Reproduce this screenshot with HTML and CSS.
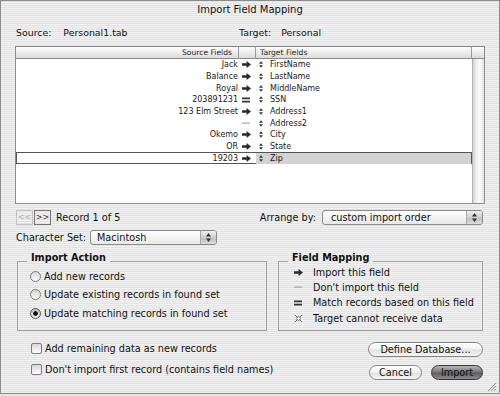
FILE: index.html
```html
<!DOCTYPE html>
<html lang="en">
<head>
    <meta charset="UTF-8">
    <meta name="viewport" content="width=device-width, initial-scale=1.0">
    <title>Import Field Mapping</title>
    <link rel="stylesheet" href="styles.css">
</head>
<body>

    <svg class="defs" xmlns="http://www.w3.org/2000/svg">
        <symbol id="i-arrow" viewBox="0 0 9 7"><path d="M0 2.2h4.6V0L9 3.5 4.6 7V4.8H0z"/></symbol>
        <symbol id="i-match" viewBox="0 0 8 6"><path d="M0 .5h8v1.7H0zM0 3.8h8v1.7H0z"/></symbol>
        <symbol id="i-skip" viewBox="0 0 8 6"><path d="M0 2.6h8v.9H0z"/></symbol>
        <symbol id="i-handle" viewBox="0 0 5 8"><path d="M2.5 0L5 3H0zM0 5h5L2.5 8z"/></symbol>
        <symbol id="i-none" viewBox="0 0 10 10"><path d="M1 1l8 8M9 1L1 9" stroke="currentColor" stroke-width="1.1" fill="none"/><circle cx="5" cy="5" r="2" fill="#fff" stroke="currentColor" stroke-width="1"/></symbol>
        <symbol id="i-updown" viewBox="0 0 5 9"><path d="M2.5 0L5 3.4H0zM0 5.6h5L2.5 9z"/></symbol>
    </svg>

    <div class="window">
        <div class="titlebar">Import Field Mapping</div>

        <div class="content">
            <div class="files">
                <div class="file-src"><span>Source:</span><span>Personal1.tab</span></div>
                <div class="file-dst"><span>Target:</span><span>Personal</span></div>
            </div>

            <div class="list">
                <div class="head head-src">Source Fields</div>
                <div class="head head-mid"></div>
                <div class="head head-dst">Target Fields</div>
                <div class="head head-scroll"></div>

                <div class="rows">
                    <div class="row">
                        <div class="c-src">Jack</div>
                        <div class="c-mid"><svg class="ico-arrow"><use href="#i-arrow"/></svg></div>
                        <div class="c-dst"><svg class="ico-handle"><use href="#i-handle"/></svg>FirstName</div>
                    </div>
                    <div class="row">
                        <div class="c-src">Balance</div>
                        <div class="c-mid"><svg class="ico-arrow"><use href="#i-arrow"/></svg></div>
                        <div class="c-dst"><svg class="ico-handle"><use href="#i-handle"/></svg>LastName</div>
                    </div>
                    <div class="row">
                        <div class="c-src">Royal</div>
                        <div class="c-mid"><svg class="ico-arrow"><use href="#i-arrow"/></svg></div>
                        <div class="c-dst"><svg class="ico-handle"><use href="#i-handle"/></svg>MiddleName</div>
                    </div>
                    <div class="row">
                        <div class="c-src">203891231</div>
                        <div class="c-mid"><svg class="ico-match"><use href="#i-match"/></svg></div>
                        <div class="c-dst"><svg class="ico-handle"><use href="#i-handle"/></svg>SSN</div>
                    </div>
                    <div class="row">
                        <div class="c-src">123 Elm Street</div>
                        <div class="c-mid"><svg class="ico-arrow"><use href="#i-arrow"/></svg></div>
                        <div class="c-dst"><svg class="ico-handle"><use href="#i-handle"/></svg>Address1</div>
                    </div>
                    <div class="row">
                        <div class="c-src"></div>
                        <div class="c-mid"><svg class="ico-skip"><use href="#i-skip"/></svg></div>
                        <div class="c-dst"><svg class="ico-handle"><use href="#i-handle"/></svg>Address2</div>
                    </div>
                    <div class="row">
                        <div class="c-src">Okemo</div>
                        <div class="c-mid"><svg class="ico-arrow"><use href="#i-arrow"/></svg></div>
                        <div class="c-dst"><svg class="ico-handle"><use href="#i-handle"/></svg>City</div>
                    </div>
                    <div class="row">
                        <div class="c-src">OR</div>
                        <div class="c-mid"><svg class="ico-arrow"><use href="#i-arrow"/></svg></div>
                        <div class="c-dst"><svg class="ico-handle"><use href="#i-handle"/></svg>State</div>
                    </div>
                    <div class="row sel">
                        <div class="c-src">19203</div>
                        <div class="c-mid"><svg class="ico-arrow"><use href="#i-arrow"/></svg></div>
                        <div class="c-dst"><svg class="ico-handle"><use href="#i-handle"/></svg>Zip</div>
                    </div>
                </div>

                <div class="scroll"></div>
            </div>

            <div class="nav">
                <div class="pager">
                    <span class="pg pg-off">&lt;&lt;</span>
                    <span class="pg">&gt;&gt;</span>
                    <span class="record">Record 1 of 5</span>
                </div>
                <div class="arrange">
                    <span>Arrange by:</span>
                    <div class="popup popup-wide">
                        <span class="popup-text">custom import order</span>
                        <span class="popup-arrows"><svg><use href="#i-updown"/></svg></span>
                    </div>
                </div>
            </div>

            <div class="charset">
                <span class="charset-label">Character Set:</span>
                <div class="popup popup-small">
                    <span class="popup-text">Macintosh</span>
                    <span class="popup-arrows"><svg><use href="#i-updown"/></svg></span>
                </div>
            </div>

            <div class="groups">
                <div class="group group-action">
                    <div class="group-title">Import Action</div>
                    <div class="opts">
                        <div class="opt"><span class="radio"></span>Add new records</div>
                        <div class="opt"><span class="radio"></span>Update existing records in found set</div>
                        <div class="opt"><span class="radio on"></span>Update matching records in found set</div>
                    </div>
                </div>
                <div class="group group-map">
                    <div class="group-title">Field Mapping</div>
                    <div class="keys">
                        <div class="key"><span class="key-ico"><svg class="ico-arrow"><use href="#i-arrow"/></svg></span>Import this field</div>
                        <div class="key"><span class="key-ico"><svg class="ico-skip"><use href="#i-skip"/></svg></span>Don't import this field</div>
                        <div class="key"><span class="key-ico"><svg class="ico-match"><use href="#i-match"/></svg></span>Match records based on this field</div>
                        <div class="key"><span class="key-ico"><svg class="ico-none"><use href="#i-none"/></svg></span>Target cannot receive data</div>
                    </div>
                </div>
            </div>

            <div class="bottom">
                <div class="checks">
                    <div class="check"><span class="box"></span>Add remaining data as new records</div>
                    <div class="check"><span class="box"></span>Don't import first record (contains field names)</div>
                </div>
                <div class="buttons">
                    <button class="btn btn-define">Define Database...</button>
                    <div class="btn-row">
                        <button class="btn btn-cancel">Cancel</button>
                        <button class="btn btn-import">Import</button>
                    </div>
                </div>
            </div>
        </div>

        <svg class="grip" viewBox="0 0 11 11"><path d="M10 2L2 10M10 5L5 10M10 8L8 10" stroke="#8a8a8a" stroke-width="1"/></svg>
    </div>

</body>
</html>
```

FILE: styles.css
```css
body {
    margin: 0;
    background-color: #e4e4e4;
    font-family: "DejaVu Sans", sans-serif;
    color: #111;
}
.defs {
    display: none;
}
.window {
    position: relative;
    width: 500px;
    height: 394px;
    box-sizing: border-box;
    border: 1px solid #8c8c8c;
    background: repeating-linear-gradient(to bottom, #f1f1f1 0, #f1f1f1 1px, #e3e3e3 1px, #e3e3e3 2px);
    background-attachment: fixed;
    display: flex;
    flex-direction: column;
}
.titlebar {
    height: 17px;
    line-height: 17px;
    font-size: 10px;
    text-align: center;
    color: #111;
}
.content {
    padding: 9px 15px 0 15px;
    display: flex;
    flex-direction: column;
    font-size: 9.7px;
}

/* source / target line */
.files {
    display: flex;
    height: 12px;
    line-height: 12px;
    font-size: 9.4px;
}
.file-src {
    width: 223px;
    display: flex;
    gap: 12px;
}
.file-dst {
    display: flex;
    gap: 10px;
}

/* mapping list */
.list {
    margin: 7px -1px 0;
    height: 158px;
    box-sizing: border-box;
    border: 1px solid #8a8a8a;
    background-color: #fff;
    display: grid;
    grid-template-columns: 223px 17px 216px 1fr;
    grid-template-rows: 12px 1fr;
}
.head {
    box-sizing: border-box;
    background: linear-gradient(to bottom, #fdfdfd, #e9e9e9 60%, #dcdcdc);
    border-right: 1px solid #9c9c9c;
    border-bottom: 1px solid #8a8a8a;
    font-size: 7.6px;
    line-height: 11px;
    color: #222;
}
.head-src {
    text-align: right;
    padding-right: 6px;
}
.head-dst {
    padding-left: 4px;
}
.head-scroll {
    border-right: none;
}
.rows {
    grid-column: 1 / 4;
    display: flex;
    flex-direction: column;
}
.row {
    height: 11.67px;
    display: grid;
    grid-template-columns: 223px 17px 1fr;
    align-items: center;
    font-size: 8px;
    line-height: 11px;
    color: #1a1a1a;
}
.c-src {
    text-align: right;
    padding-right: 1px;
    white-space: nowrap;
}
.c-mid {
    display: flex;
    align-items: center;
    padding-left: 3px;
    color: #333;
}
.c-dst {
    display: flex;
    align-items: center;
    padding-left: 3px;
    height: 100%;
}
.row.sel {
    box-sizing: border-box;
    border: 1px solid #555;
    grid-template-columns: 222px 17px 1fr;
}
.row.sel .c-dst {
    background-color: #d3d3d3;
}
.ico-arrow {
    width: 9px;
    height: 7px;
    fill: #2a2a2a;
}
.ico-match {
    width: 8px;
    height: 6px;
    fill: #333;
}
.ico-skip {
    width: 8px;
    height: 6px;
    fill: #8a8a8a;
}
.ico-handle {
    width: 4px;
    height: 7px;
    fill: #333;
    margin-right: 7px;
}
.ico-none {
    width: 9px;
    height: 9px;
    color: #666;
}
.scroll {
    border-left: 1px solid #b4b4b4;
    background: linear-gradient(to right, #cfcfcf, #eeeeee 3px, #fafafa 7px, #e2e2e2);
}

/* record nav + arrange */
.nav {
    margin-top: 6px;
    height: 15px;
    display: flex;
    align-items: center;
}
.pager {
    display: flex;
    align-items: center;
    gap: 1px;
}
.pg {
    box-sizing: border-box;
    width: 17px;
    height: 15px;
    border: 1px solid #777;
    font-size: 8px;
    line-height: 13px;
    text-align: center;
    color: #333;
}
.pg-off {
    border-color: #c4c4c4;
    color: #b0b0b0;
}
.record {
    margin-left: 4px;
}
.arrange {
    margin-left: auto;
    margin-right: 1px;
    display: flex;
    align-items: center;
    gap: 6px;
}
.popup {
    box-sizing: border-box;
    height: 15px;
    border: 1px solid #8a8a8a;
    border-radius: 3px;
    background: linear-gradient(to bottom, #ffffff, #f4f4f4 50%, #e8e8e8);
    display: flex;
    align-items: center;
    overflow: hidden;
}
.popup-wide {
    width: 161px;
}
.popup-wide .popup-text {
    padding-left: 8px;
}
.popup-small {
    width: 127px;
}
.popup-small .popup-text {
    padding-left: 6px;
}
.popup-text {
    flex: 1;
    line-height: 13px;
}
.popup-arrows {
    width: 15px;
    height: 100%;
    border-left: 1px solid #a8a8a8;
    background: linear-gradient(to bottom, #eeeeee, #cfcfcf 50%, #bdbdbd 51%, #dcdcdc);
    display: flex;
    align-items: center;
    justify-content: center;
}
.popup-arrows svg {
    width: 5px;
    height: 9px;
    fill: #333;
}
.charset {
    margin-top: 5px;
    height: 15px;
    display: flex;
    align-items: center;
}
.charset-label {
    width: 74px;
}

/* group boxes */
.groups {
    margin-top: 16px;
    display: flex;
    gap: 11px;
}
.group {
    box-sizing: border-box;
    height: 70px;
    border: 1px solid #a2a2a2;
}
.group-action {
    margin-left: 1px;
    width: 250px;
}
.group-map {
    width: 205px;
}
.group-title {
    width: max-content;
    margin: -10.5px 0 0 9px;
    padding: 0 4px;
    font-weight: bold;
    line-height: 12px;
    background: repeating-linear-gradient(to bottom, #f1f1f1 0, #f1f1f1 1px, #e3e3e3 1px, #e3e3e3 2px);
    background-attachment: fixed;
}
.opts {
    margin-top: 4px;
    padding-left: 12px;
}
.opt {
    height: 18.3px;
    display: flex;
    align-items: center;
    gap: 3px;
}
.radio {
    box-sizing: border-box;
    width: 11px;
    height: 11px;
    border: 1px solid #7a7a7a;
    border-radius: 50%;
    background: linear-gradient(to bottom, #d6d6d6, #fbfbfb);
}
.radio.on {
    border-color: #555;
    background: radial-gradient(circle, #111 0, #111 2px, transparent 2.6px), linear-gradient(to bottom, #bcbcbc, #eeeeee);
}
.keys {
    margin-top: 1px;
    padding-left: 14px;
}
.key {
    height: 15.3px;
    display: flex;
    align-items: center;
}
.key-ico {
    width: 10px;
    margin-right: 10px;
    display: flex;
    justify-content: center;
}

/* checkboxes and buttons */
.bottom {
    margin-top: 7px;
    display: flex;
}
.checks {
    padding-left: 15px;
}
.check {
    height: 21px;
    display: flex;
    align-items: center;
    gap: 3px;
}
.box {
    box-sizing: border-box;
    width: 11px;
    height: 11px;
    border: 1px solid #7c7c7c;
    border-radius: 2px;
    background: linear-gradient(to bottom, #d8d8d8, #fbfbfb);
}
.buttons {
    margin-left: auto;
    margin-right: 1px;
    padding-top: 4px;
    display: flex;
    flex-direction: column;
    align-items: flex-end;
    gap: 8px;
}
.btn-row {
    display: flex;
    gap: 9px;
}
.btn {
    box-sizing: border-box;
    height: 15px;
    padding: 0;
    border: 1px solid #848484;
    border-radius: 8px;
    background: linear-gradient(to bottom, #ffffff, #f2f2f2 45%, #e2e2e2 55%, #f6f6f6);
    font-family: "DejaVu Sans", sans-serif;
    font-size: 9.7px;
    line-height: 13px;
    color: #111;
}
.btn-define {
    width: 115px;
}
.btn-cancel {
    width: 53px;
}
.btn-import {
    width: 52px;
    border-color: #333;
    background: linear-gradient(to bottom, #b8b8b8, #777777 45%, #5e5e5e 55%, #8e8e8e);
}
.grip {
    position: absolute;
    right: 2px;
    bottom: 1px;
    width: 11px;
    height: 11px;
}
```
